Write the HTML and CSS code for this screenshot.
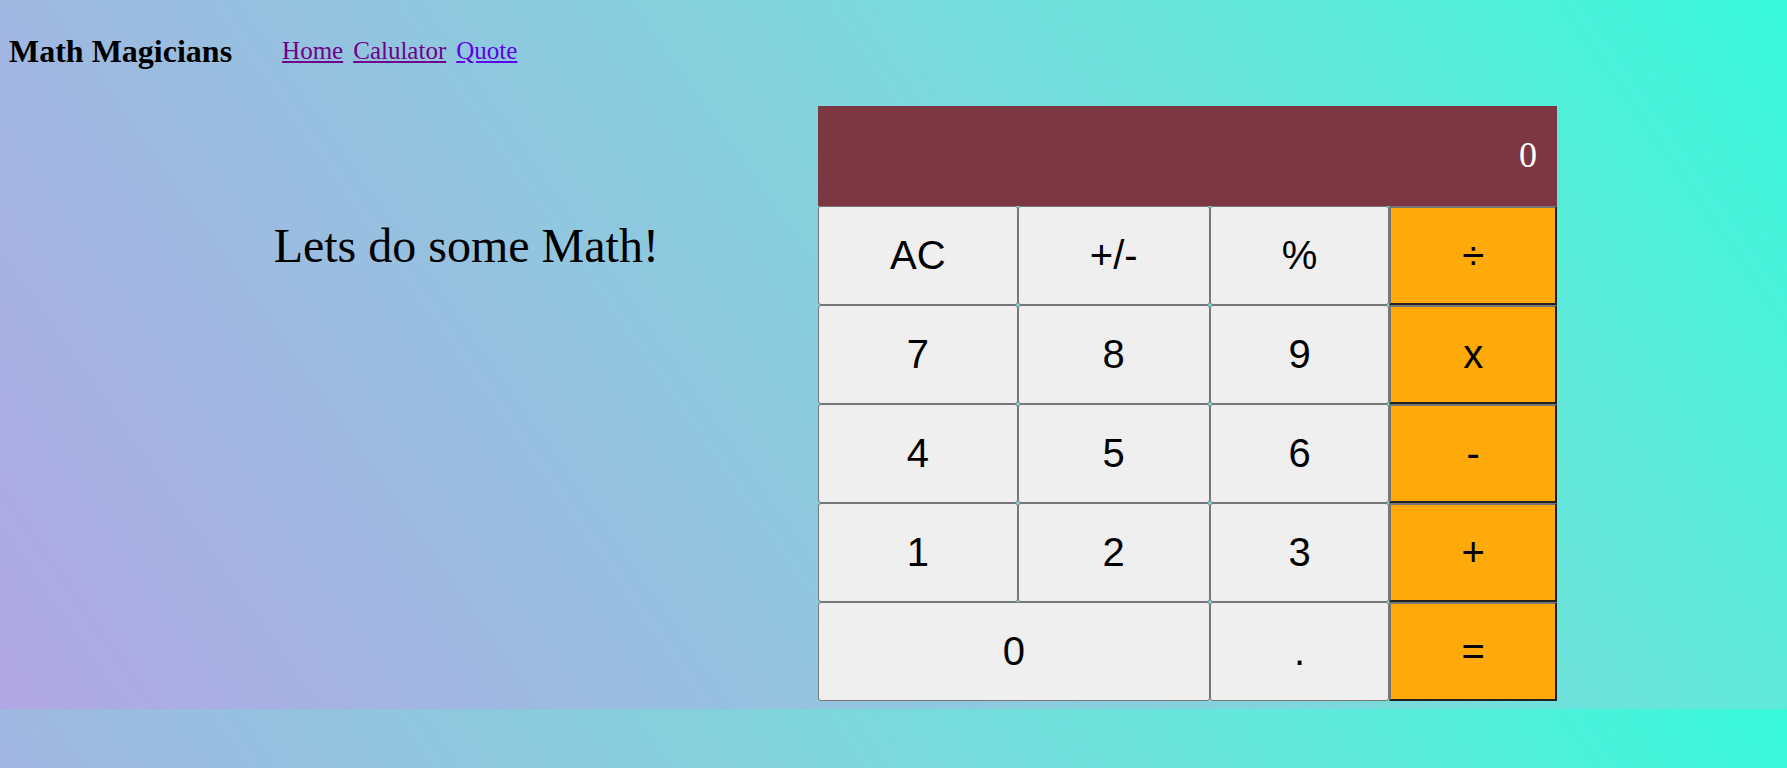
FILE: index.html
```html
<!DOCTYPE html>
<html lang="en">
<head>
  <meta charset="utf-8">
  <title>Math Magicians</title>
  <link rel="stylesheet" href="styles.css">
</head>
<body>
  <header class="header">
    <h1 class="brand">Math Magicians</h1>
    <nav class="nav">
      <a class="nav-link" href="#home">Home</a>
      <a class="nav-link" href="#calculator">Calulator</a>
      <a class="nav-link nav-link-new" href="#quote">Quote</a>
    </nav>
  </header>
  <main class="main">
    <h2 class="title">Lets do some Math!</h2>
    <section class="calculator" aria-label="Calculator">
      <output class="display">0</output>
      <button class="key" type="button">AC</button>
      <button class="key" type="button">+/-</button>
      <button class="key" type="button">%</button>
      <button class="key operator" type="button">÷</button>
      <button class="key" type="button">7</button>
      <button class="key" type="button">8</button>
      <button class="key" type="button">9</button>
      <button class="key operator" type="button">x</button>
      <button class="key" type="button">4</button>
      <button class="key" type="button">5</button>
      <button class="key" type="button">6</button>
      <button class="key operator" type="button">-</button>
      <button class="key" type="button">1</button>
      <button class="key" type="button">2</button>
      <button class="key" type="button">3</button>
      <button class="key operator" type="button">+</button>
      <button class="key zero" type="button">0</button>
      <button class="key" type="button">.</button>
      <button class="key operator" type="button">=</button>
    </section>
  </main>
</body>
</html>
```
FILE: styles.css
```css
body {
  margin: 8px;
  font-family: "Liberation Serif", serif;
  background: linear-gradient(55deg, #b1a6e3, #96c1e0 33%, #83d3dc 54%, #72dfdc 66%, #5aecdb 82%, #37f9da);
}

.header {
  display: flex;
  align-items: center;
  gap: 50px;
  padding: 25px 1px 36px;
}

.brand {
  margin: 0;
  font-size: 32px;
}

.nav {
  display: flex;
  gap: 10px;
  padding-bottom: 2px;
  font-size: 25px;
}

.nav-link {
  color: #6f0089;
}

.nav-link-new {
  color: #5e00e8;
}

.main {
  display: flex;
  align-items: flex-start;
  gap: 159px;
  padding: 0 222px 0 15%;
}

.title {
  margin: 112px 0 0;
  font-size: 48px;
  font-weight: 400;
  white-space: nowrap;
}

.calculator {
  flex: 1;
  display: grid;
  grid-template-columns: repeat(4, auto);
  grid-template-rows: 100px;
  grid-auto-rows: 99px;
}

.display {
  grid-column: 1 / -1;
  display: flex;
  align-items: center;
  justify-content: flex-end;
  padding: 0 20px 2px;
  font-size: 36px;
  color: #fff;
  background: #7c3742;
}

.key {
  padding: 1px 7px;
  font-family: "Liberation Sans", Arial, sans-serif;
  font-size: 40px;
  color: #000;
  background-color: #efefef;
  border: 1px solid #767676;
  border-radius: 3px;
}

.operator {
  padding: 1px 6px;
  background-color: #ffa90a;
  border: 2px outset #767676;
  border-radius: 0;
}

.zero {
  grid-column: span 2;
}
```
